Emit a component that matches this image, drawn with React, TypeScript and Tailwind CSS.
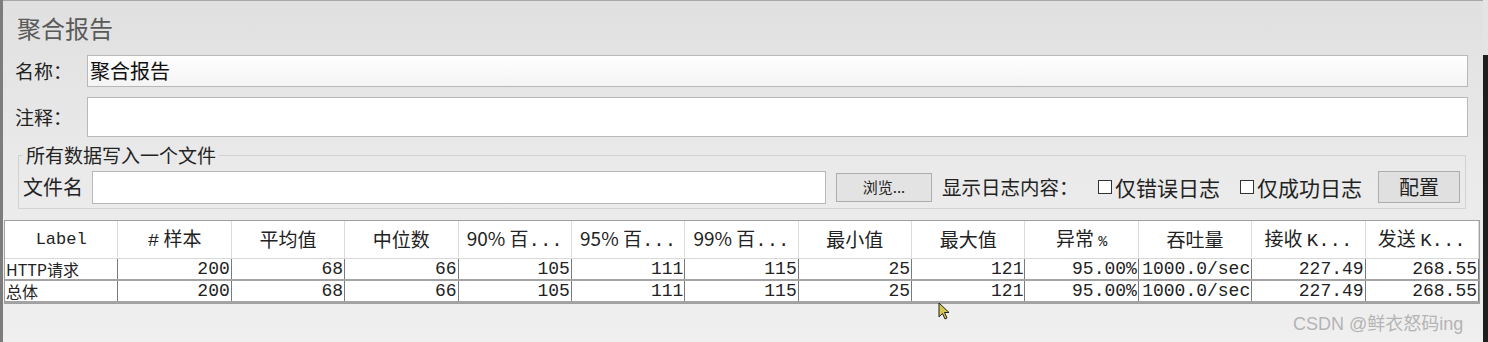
import React from "react";

const cjk = { fontFamily: '"Noto Sans CJK SC", "Noto Sans", sans-serif' };
const mono = { fontFamily: '"Liberation Mono", "Noto Sans CJK SC", monospace' };

const headers: React.ReactNode[] = [
  <span style={{ ...mono, fontSize: 17 }}>Label</span>,
  <span><span style={mono}>#</span>&nbsp;样本</span>,
  "平均值",
  "中位数",
  <span>90% 百<span style={mono}>...</span></span>,
  <span>95% 百<span style={mono}>...</span></span>,
  <span>99% 百<span style={mono}>...</span></span>,
  "最小值",
  "最大值",
  <span>异常 <span style={{ ...mono, fontSize: 15 }}>%</span></span>,
  "吞吐量",
  <span>接收 <span style={mono}>K...</span></span>,
  <span>发送 <span style={mono}>K...</span></span>,
];
const rows = [
  ["HTTP请求", "200", "68", "66", "105", "111", "115", "25", "121", "95.00%", "1000.0/sec", "227.49", "268.55"],
  ["总体", "200", "68", "66", "105", "111", "115", "25", "121", "95.00%", "1000.0/sec", "227.49", "268.55"],
];

function Check({ label }: { label: string }) {
  return (
    <div className="flex items-center">
      <span className="w-[14px] h-[14px] border-[1.5px] border-[#333] bg-white mr-[3px]" />
      <span className="text-[21px] leading-[24px] text-[#222]">{label}</span>
    </div>
  );
}

export default function App() {
  return (
    <div className="relative w-[1488px] h-[342px] overflow-hidden flex bg-gradient-to-b from-[#e0e0e0] via-[#eaeaea] to-[#efefef]" style={cjk}>
      <div className="w-[3px] bg-[#7c7c7c]" />
      <div className="flex-1 flex flex-col border-t border-[#a8a8a8]">
        <div className="pl-[14px] pt-[13px] text-[24px] leading-[28px] text-[#5a5a5a]">聚合报告</div>
        <div className="mt-[13px] flex items-center h-[32px]">
          <div className="w-[84px] pl-[12px] text-[19px] text-[#222]">名称：</div>
          <div className="w-[1381px] h-[32px] border border-[#b8b8b8] bg-gradient-to-b from-white to-[#f4f4f4] flex items-center pl-[2px] text-[20px] text-[#111]">聚合报告</div>
        </div>
        <div className="mt-[10px] flex items-center h-[40px]">
          <div className="w-[84px] pl-[12px] text-[19px] text-[#222]">注释：</div>
          <div className="w-[1381px] h-[40px] border border-[#b8b8b8] bg-white" />
        </div>
        <fieldset className="mt-[7px] ml-[15px] w-[1448px] border border-[#d2d2d2] px-[4px] pb-[4px]">
          <legend className="px-[3px] text-[19px] leading-[22px] text-[#222]">所有数据写入一个文件</legend>
          <div className="mt-[4px] flex items-center h-[34px]">
            <div className="w-[69px] text-[20px] text-[#222]">文件名</div>
            <div className="w-[734px] h-[33px] border border-[#b8b8b8] bg-white" />
            <div className="ml-[10px] w-[96px] h-[29px] border border-[#adadad] bg-[#e3e3e3] flex items-center justify-center text-[15px] text-[#222]">浏览...</div>
            <div className="ml-[10px] w-[156px] text-[19.5px] text-[#222] whitespace-nowrap">显示日志内容：</div>
            <div className="w-[142px]"><Check label="仅错误日志" /></div>
            <div className="w-[138px]"><Check label="仅成功日志" /></div>
            <div className="w-[82px] h-[32px] border border-[#adadad] bg-[#e0e0e0] flex items-center justify-center text-[20px] text-[#222]">配置</div>
          </div>
        </fieldset>
        <div className="mt-[11px] ml-[1px] w-[1476px] border border-[#a0a0a0] bg-white">
          <div className="grid grid-cols-[repeat(13,minmax(0,1fr))] h-[38px] bg-white border-b border-[#d8d8d8]">
            {headers.map((h, i) => (
              <div key={i} className="flex items-center justify-center border-r border-[#dcdcdc] text-[19px] text-[#222] whitespace-nowrap">{h}</div>
            ))}
          </div>
          {rows.map((r, ri) => (
            <div key={ri} className="grid grid-cols-[repeat(13,minmax(0,1fr))] h-[22px] border-b-2 border-[#a4a4a4]">
              {r.map((c, ci) => (
                <div key={ci} className={`flex items-center border-r border-[#7a7a7a] text-[18px] leading-[20px] text-[#222] whitespace-nowrap ${ci === 0 ? "justify-start pl-[1px]" : "justify-end pr-[1px]"}`} style={ci === 0 ? { ...cjk, fontSize: 16, lineHeight: "20px" } : mono}>{c}</div>
              ))}
            </div>
          ))}
        </div>
      </div>
      <div className="w-[5px] flex flex-col">
        <div className="h-[55px] bg-[#e4e4e4]" />
        <div className="flex-1 bg-[#1e1e1e]" />
      </div>
      <div className="absolute left-[1293px] top-[311px] text-[18px] text-[#b4b4b4]" style={{ fontFamily: '"Liberation Sans", "Noto Sans CJK SC", sans-serif' }}>CSDN @鲜衣怒码ing</div>
      <svg className="absolute left-[938px] top-[302px]" width="14" height="20" viewBox="0 0 14 20">
        <path d="M1 1 L1 15 L4.5 11.5 L7 17 L9 16 L6.5 10.5 L11 10.5 Z" fill="#d4c84a" stroke="#222" strokeWidth="1" />
      </svg>
    </div>
  );
}
